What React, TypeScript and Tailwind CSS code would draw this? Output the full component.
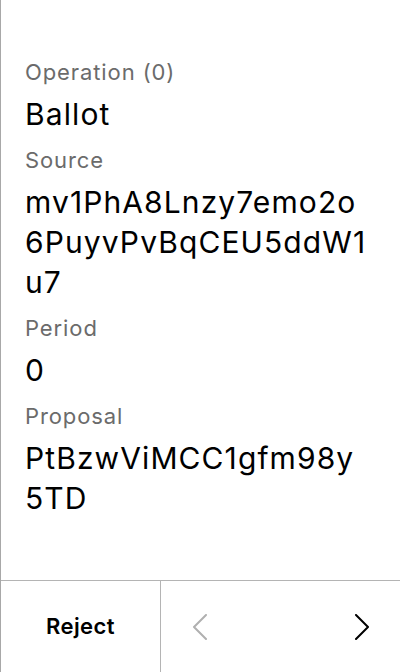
const fields = [
  { label: "Operation (0)", value: "Ballot" },
  { label: "Source", value: "mv1PhA8Lnzy7emo2o6PuyvPvBqCEU5ddW1u7" },
  { label: "Period", value: "0" },
  { label: "Proposal", value: "PtBzwViMCC1gfm98y5TD" },
];

const Chevron = ({ dir, className }: { dir: "left" | "right"; className: string }) => (
  <svg width="16" height="26" viewBox="0 0 16 26" fill="none" className={className}>
    <polyline
      points={dir === "left" ? "14,1 2,13 14,25" : "2,1 14,13 2,25"}
      stroke="currentColor"
      strokeWidth="2"
      strokeLinecap="round"
      strokeLinejoin="round"
    />
  </svg>
);

export default function App() {
  return (
    <div
      className="h-[672px] w-[400px] flex flex-col bg-white border-l border-l-[#a8a8a8] text-black"
      style={{ fontFamily: "Inter, 'Noto Sans', sans-serif" }}
    >
      <div className="flex-1 pl-6 pr-[33px] pt-[58px]">
        {fields.map((f) => (
          <div key={f.label} className="mb-[12px]">
            <div className="text-[22px] leading-[28px] tracking-[0.9px] text-[#6b6b6b]">{f.label}</div>
            <div className="mt-[8px] text-[30px] leading-[40px] tracking-[1.1px] break-all">{f.value}</div>
          </div>
        ))}
      </div>
      <div className="h-[92px] flex border-t border-t-[#b4b4b4]">
        <button className="w-[160px] flex items-center justify-center border-r border-r-[#b4b4b4] text-[22px] font-semibold tracking-[0.4px]">
          Reject
        </button>
        <div className="flex-1 flex items-center justify-between pl-[31px] pr-[30px]">
          <Chevron dir="left" className="text-[#b0b0b0]" />
          <Chevron dir="right" className="text-black" />
        </div>
      </div>
    </div>
  );
}
